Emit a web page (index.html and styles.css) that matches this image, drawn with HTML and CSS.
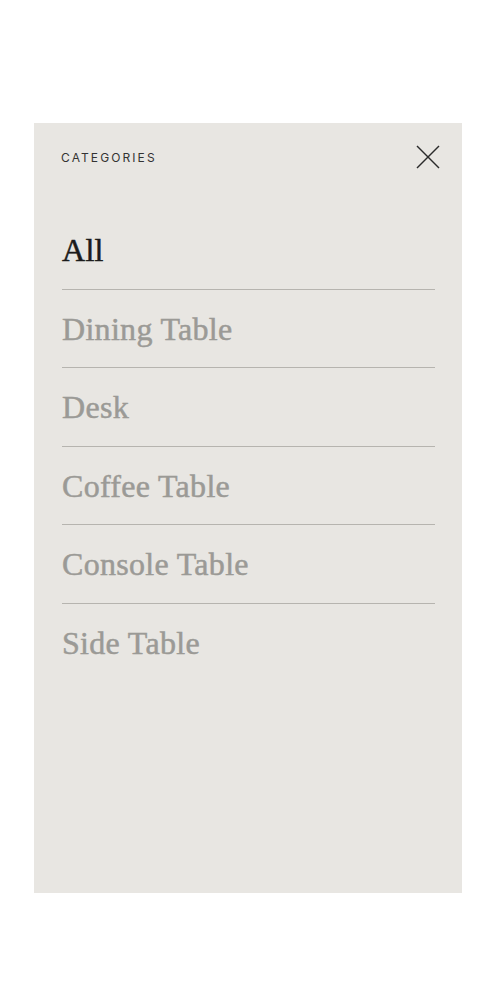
FILE: index.html
```html
<!DOCTYPE html>
<html lang="en">

<head>
    <meta charset="UTF-8">
    <meta name="viewport" content="width=device-width, initial-scale=1.0">
    <title>Categories</title>
    <link rel="stylesheet" href="styles.css">
</head>

<body>

    <!-- Category Drawer -->
    <aside class="category-drawer">
        <div class="drawer-header">
            <span class="drawer-title">CATEGORIES</span>
            <button class="close-btn" aria-label="Close">
                <svg width="24" height="24" viewBox="0 0 24 24" fill="none" stroke="#2b2b2b" stroke-width="1.4">
                    <line x1="1" y1="1" x2="23" y2="23" />
                    <line x1="23" y1="1" x2="1" y2="23" />
                </svg>
            </button>
        </div>

        <ul class="category-list">
            <li class="category-item active">All</li>
            <li class="category-item">Dining Table</li>
            <li class="category-item">Desk</li>
            <li class="category-item">Coffee Table</li>
            <li class="category-item">Console Table</li>
            <li class="category-item">Side Table</li>
        </ul>
    </aside>

</body>

</html>
```

FILE: styles.css
```css
body {
    font-family: Inter, "Liberation Sans", sans-serif;
    background-color: #ffffff;
    margin: 0;
    padding: 0;
}

.category-drawer {
    width: 428px;
    height: 770px;
    margin: 123px 30px 0 34px;
    padding: 22px 22px 0 26px;
    box-sizing: border-box;
    background-color: #e8e6e2;
}

.drawer-header {
    display: flex;
    justify-content: space-between;
    align-items: center;
    height: 24px;
}

.drawer-title {
    font-size: 12px;
    letter-spacing: 2.1px;
    color: #333333;
    padding-left: 1px;
}

.close-btn {
    background: none;
    border: none;
    padding: 0;
    width: 24px;
    height: 24px;
    cursor: pointer;
}

.close-btn svg {
    display: block;
}

.category-list {
    list-style: none;
    margin: 42px 5px 0 2px;
    padding: 0;
}

.category-item {
    font-family: "Liberation Serif", "DejaVu Serif", serif;
    font-size: 32px;
    line-height: 38px;
    letter-spacing: 0.3px;
    padding: 20px 0 19.5px;
    border-bottom: 1px solid #b6b4af;
    color: #9b9a96;
    -webkit-text-stroke: 0.5px currentColor;
    cursor: pointer;
}

.category-item:last-child {
    border-bottom: none;
}

.category-item.active {
    color: #1b1b1b;
}
```
